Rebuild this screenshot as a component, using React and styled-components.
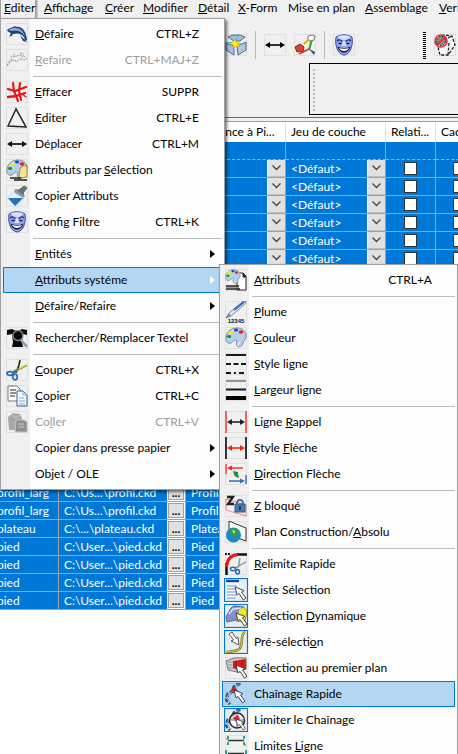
import React from "react";
import styled, { createGlobalStyle, css } from "styled-components";

const Global = createGlobalStyle`
  * { box-sizing: border-box; }
  body { margin: 0; background: #fff; overflow: hidden; }
  body, button, select, input { font-family: Lato, "Open Sans", sans-serif; font-size: 12px; line-height: 16px; color: #000; }
  button, select, input { margin: 0; padding: 0; border: 0; border-radius: 0; background: none; }
  u { text-underline-offset: 1px; text-decoration-thickness: 1px; text-decoration-skip-ink: none; }
`;

const C = { face: "#f0f0f0", blue: "#0078d7", line: "#a0a0a0", hot: "#b3d7f3", menu: "#fdfdfd" };

const Window = styled.div`
  position: relative;
  display: flex;
  flex-direction: column;
  height: 100vh;
  overflow: hidden;
`;

const MenuBar = styled.nav`
  display: grid;
  grid-template-columns: 36px 65px 38px 55px 40px 50px 77px 74px 1fr;
  height: 18px;
  background: ${C.face};
  overflow: hidden;
`;

const BarItem = styled.button`
  height: 18px;
  padding: 0 0 2px ${(p) => (p.$open ? 3 : 4)}px;
  text-align: left;
  white-space: nowrap;
  ${(p) =>
    p.$open
      ? css`border: solid ${C.line}; border-width: 0 1px; box-shadow: 1px 0 2px #888;`
      : css`&:nth-child(2) { padding-left: 8px; }`}
`;

const ToolArea = styled.header`
  flex: none;
  display: flex;
  flex-direction: column;
  height: 100px;
  padding-top: 13px;
  background: ${C.face};
  border-bottom: 1px solid #696969;
`;

const ToolRow = styled.div`
  display: flex;
  align-items: center;
  height: 28px;
  padding-left: 225px;
  gap: 8px;
`;

const ToolButton = styled.button`
  flex: none;
  width: 22px;
  height: 22px;
  margin-right: ${(p) => p.$after || 0}px;
`;

const ToolRule = styled.span`
  width: 1px;
  height: 28px;
  background: #b8b8b8;
`;

const Grip = styled.span`
  display: block;
  width: ${(p) => p.$w}px;
  height: ${(p) => p.$h}px;
  background: repeating-linear-gradient(${(p) => p.$c} 0 ${(p) => p.$step / 2}px, transparent ${(p) => p.$step / 2}px ${(p) => p.$step}px);
`;

const DockPanel = styled.section`
  height: 52px;
  margin: 4px 0 0 309px;
  padding: 5px 3px;
  border: 1px solid #000;
  border-right: 0;
`;

const Grid = styled.main`
  flex: 1;
  min-height: 0;
  margin-top: 3px;
  border-top: 1px solid ${C.line};
  background: #fff;
  box-shadow: 0 -3px 0 ${C.face};
  overflow: hidden;
`;

const Table = styled.table`
  width: 520px;
  margin-left: -4px;
  table-layout: fixed;
  border-collapse: separate;
  border-spacing: 0;
`;

const Th = styled.th`
  height: 20px;
  padding: 0 5px;
  border-right: 1px solid #e0e0e0;
  font-weight: 400;
  text-align: left;
  white-space: nowrap;
  overflow: hidden;
`;

const Td = styled.td`
  height: 18px;
  padding: 0;
  background: ${C.blue};
  background-clip: padding-box;
  color: #fff;
  border-right: 1px solid ${C.line};
  border-bottom: 1px ${(p) => (p.$first ? "dashed #e8b020" : `solid ${C.line}`)};
  vertical-align: top;
  white-space: nowrap;
  overflow: hidden;
`;

const BodyRow = styled.tr`
  background: ${C.blue};
`;

const Cell = styled.div`
  display: flex;
  align-items: center;
  justify-content: ${(p) => (p.$center ? "center" : "flex-start")};
  height: 17px;
  padding-left: ${(p) => p.$pad || 0}px;
`;

const Grow = styled.span`
  flex: 1;
  min-width: 0;
`;

const Browse = styled.button`
  width: 18px;
  height: 17px;
  border: 1px solid #fff;
  background: #e1e1e1;
  box-shadow: inset 0 0 0 1px ${C.line};
  font-weight: 700;
  line-height: 8px;
`;

const Combo = styled.label`
  display: flex;
  flex: 1;
  height: 17px;
`;

const PickButton = styled.button`
  display: flex;
  height: 17px;
`;

const Select = styled.select`
  flex: 1;
  height: 17px;
  appearance: none;
  color: #fff;
`;

const Drop = styled.span`
  display: flex;
  align-items: center;
  justify-content: center;
  width: 18px;
  height: 17px;
  background: #e1e1e1;
  border-left: 1px solid #fff;
  border-bottom: 1px solid #c0c0c0;
  pointer-events: none;
`;

const Check = styled.input`
  appearance: none;
  width: 13px;
  height: 13px;
  border: 1px solid #333;
  background: #fff;
`;

const Popup = styled.div`
  position: absolute;
  z-index: ${(p) => (p.$sub ? 2 : 1)};
  left: ${(p) => (p.$sub ? 219 : 0)}px;
  top: ${(p) => (p.$sub ? 264 : 18)}px;
  width: ${(p) => (p.$sub ? 239 : 225)}px;
  padding: 2px;
  border: 1px solid ${C.line};
  background: linear-gradient(to right, ${C.face} 29px, ${C.menu} 29px);
  box-shadow: 2px 2px 3px rgba(0, 0, 0, 0.55);
`;

const Item = styled.button`
  display: flex;
  align-items: center;
  width: 100%;
  height: 26px;
  padding: 0 1px;
  border: 1px solid ${(p) => (p.$hot ? C.blue : "transparent")};
  background: ${(p) => (p.$hot ? C.hot : "transparent")};
  color: ${(p) => (p.disabled ? "#9d9d9d" : "#000")};
  text-align: left;
  white-space: nowrap;
`;

const IconBox = styled.span`
  flex: none;
  display: flex;
  align-items: center;
  justify-content: center;
  width: 24px;
  height: 24px;
  margin-right: 6px;
  border: 1px solid ${(p) => (p.$checked ? C.blue : "transparent")};
  background: ${(p) => (p.$checked ? "#e4eef7" : "transparent")};
`;

const Keys = styled.span`
  margin-right: 21px;
`;

const Arrow = styled.span`
  width: 5px;
  height: 8px;
  margin-right: 5px;
  background: ${(p) => (p.$light ? "#fff" : "#000")};
  clip-path: polygon(0 0, 100% 50%, 0 100%);
`;

const Separator = styled.hr`
  height: 1px;
  margin: 3px 0 2px 30px;
  border: 0;
  background: #bdbdbd;
`;

const DoubleArrow = ({ c = "#000", x1 = 1, x2 = 21, y = 11 }) => (
  <g fill={c}>
    <path d={`M${x1} ${y}l5-3v6z M${x2} ${y}l-5-3v6z`} />
    <path d={`M${x1 + 3} ${y}H${x2 - 3}`} stroke={c} strokeWidth="1.6" />
  </g>
);

const Palette = () => (
  <>
    <path d="M1 13C0 6 5 1 12 1c6 0 10 4 9 9-.5 3-3 4-3 6 0 3-4 5-6 3-2-3 1-5-1-6-2-.8-3 2-5 3-3 1-4.600-1-5-3z" fill="#b4cfeb" stroke="#6a7890" strokeWidth=".8" />
    <path d="M3 12c0-5 3-9 9-9M14 15c0 2-1 3-1 4" stroke="#dcecfa" strokeWidth="1.500" />
    <ellipse cx="6" cy="5.500" rx="2.500" ry="1.800" fill="#f4ec10" />
    <ellipse cx="11" cy="3" rx="2.200" ry="1.600" fill="#1747c0" />
    <ellipse cx="16" cy="5" rx="2.300" ry="1.800" fill="#ec2020" />
    <ellipse cx="4" cy="9.500" rx="2.200" ry="1.800" fill="#1b9a2c" />
  </>
);

const Mask = () => (
  <>
    <path d="M3 3c5-3 11-3 16 0 1 5 0 10-2 14-2 3-5 4-6 4s-4-1-6-4C3 13 2 8 3 3z" fill="#8ea2ea" stroke="#4450a0" />
    <path d="M5 2c4-1 8-1 12 0-1 3-3 4-6 4S6 5 5 2zM10 7h2l1 5H9z" fill="#d9e1ff" />
    <path d="M4 7c2-2 4-1 5 1M13 8c1-2 3-3 5-1" stroke="#20286e" strokeWidth="1.200" />
    <path d="M5 9.500c1-1 3-1 4 0-1 1-3 1-4 0zm8 0c1-1 3-1 4 0-1 1-3 1-4 0z" fill="#0b1038" />
    <path d="M4.500 12.500c4 2 9 2 13 0-1 4-4 6-6.500 6s-5.500-2-6.500-6z" fill="#10154a" />
    <path d="M6 14c3 1 7 1 10 0-1 2-3 3-5 3s-4-1-5-3z" fill="#fff" />
  </>
);

const Cursor = ({ x = 10, y = 8, flip }) => (
  <path
    d="M0 0l2 8 2-1.600 4.500 6.600 2.500-1.800L6.500 5 9 3.500z"
    transform={`translate(${x} ${y})${flip ? " scale(.85)" : ""}`}
    fill="#fff" stroke="#333" strokeWidth=".9"
  />
);

const Scissors = () => (
  <>
    <path d="M14 1l-1 5-3 8" stroke="#222" strokeWidth="1.600" />
    <path d="M21 6l-8 4-6 3" stroke="#8a8a40" strokeWidth="2" />
    <path d="M21 5.500l-8 4" stroke="#f0ea50" strokeWidth="1.300" />
    <ellipse cx="4" cy="14.500" rx="3" ry="1.900" stroke="#2a67b8" strokeWidth="1.700" />
    <ellipse cx="9" cy="18" rx="2.300" ry="2.800" stroke="#2a67b8" strokeWidth="1.700" />
    <path d="M7 13.500l4-1" stroke="#2a67b8" strokeWidth="2" />
  </>
);

const Chain = () => (
  <>
    <path d="M15 0L9 4l-1 4-5 3-2 5 4 5" stroke="#3b4f78" strokeWidth="3.500" strokeDasharray="4 1.500" />
    <path d="M14 1L9 5 7 9l-4 3-1 4 4 4" stroke="#a3b4d6" />
    <path d="M6 6l4-2 3 4-4 2z" fill="#e01818" />
  </>
);

const ICONS = {
  dolphin: (
    <>
      <path d="M1 7c2-2 4-2 6-3 1-1 3-1 3 0 6-1 10 4 11 13l-2 1-1-4c-3-4-7-4-11-3-1 0-1 2-3 1l1-2C3 9 2 9 1 7z" fill="#17407c" />
      <path d="M2 7c3-1 5-3 8-2 5 0 8 4 9 9-3-6-8-7-13-6z" fill="#86a9d8" />
      <path d="M5 11l-2 3 4-2zM14 12l3 6 4 1z" fill="#1c3f84" />
    </>
  ),
  redo: (
    <path d="M1 17c1-4 3-6 5-7l-1-3 4 1c3-2 7-3 10 0l2 2-3 1-4-1-4 3-1-2-4 1-4 5M7 5l3 2m4-3l4 1m-2 2v2" stroke="#a0a0a0" strokeDasharray="2.500 1" />
  ),
  erase: (
    <g stroke="#e81414" strokeLinecap="round">
      <path d="M7 2l1 8 4 10M14 2l-1 8 2 9" strokeWidth="2.100" />
      <path d="M2 8l7 2 11-4M2 16l8-1 9-3" strokeWidth="2.300" />
      <path d="M16 13l4 3" strokeWidth="1.300" />
    </g>
  ),
  triangle: <path d="M10 2L2 19l18 1z" stroke="#222" strokeWidth="1.500" />,
  move: <DoubleArrow />,
  paletteTag: (
    <>
      <Palette />
      <path d="M14 9l5-3 2 2v10l-8 1z" fill="#f5e58a" stroke="#988b46" />
      <path d="M4 19h11M8 21h13" stroke="#222" strokeWidth="1.300" />
    </>
  ),
  brush: (
    <>
      <path d="M18 1l3 2-4 5 1 3-9-6 4 0z" fill="#68717c" stroke="#59616a" />
      <path d="M9 4l10 7-2 2-9-6z" fill="#8e979f" />
      <path d="M7 7l11 7-8 7-9-8z" fill="#e6f1fa" stroke="#b8cfe0" strokeWidth=".6" />
      <path d="M2 13h15l-8 8z" fill="#1d73bd" />
    </>
  ),
  mask: <Mask />,
  shirt: (
    <>
      <path d="M6 2c3 2 7 2 10 0l5 1v5l-4-1-1 8 1 5H6l1-5-1-8-5 1V3z" fill="#080808" />
      <circle cx="12" cy="8.500" r="5" stroke="#7b8da4" strokeWidth="1.300" />
      <path d="M15 13l6 7" stroke="#8b9bb0" strokeWidth="2.500" />
    </>
  ),
  scissors: <Scissors />,
  copy: (
    <>
      <path d="M2 1h9l3 3v12H2z" fill="#fff" stroke="#777" />
      <path d="M4 5h6M4 8h6M4 11h5" stroke="#222" strokeWidth="1.200" />
      <path d="M11 6h6l4 4v11H11z" fill="#f4f9ff" stroke="#39619a" />
      <path d="M17 6v4h4M13 13h5M13 16h6M13 19h6" stroke="#80a8d0" />
    </>
  ),
  paste: (
    <>
      <path d="M2 6l5-4 7 1 2 4v12H3z" fill="#a8a8a8" />
      <path d="M10 9h8l3 2v10H9z" fill="#8e8e8e" stroke="#c4c4c4" />
      <path d="M6 4l4 3 4-3M12 13h6M12 16h6" stroke="#cfcfcf" />
    </>
  ),
  palettePage: (
    <>
      <path d="M12 4h6l3 3v14H12z" fill="#fff" stroke="#222" />
      <path d="M18 4v4h3" fill="#222" stroke="#222" />
      <g transform="scale(.72)"><Palette /></g>
      <path d="M1 17h13M1 20h14" stroke="#222" strokeWidth="1.500" />
      <path d="M1 18.500h13" stroke="#999" />
    </>
  ),
  pen: (
    <>
      <path d="M1 17l3-5L17 1l4-1-1 3L6 15z" fill="#dbe7f4" stroke="#58708c" strokeWidth=".8" />
      <path d="M9 9L19 1" stroke="#2a6fc0" strokeWidth="1.800" />
      <path d="M1 17l3-4 2 1z" fill="#777" />
      <text x="11" y="22" textAnchor="middle" fontSize="6" fontWeight="700" fontFamily="Liberation Sans" fill="#111">12345</text>
    </>
  ),
  palette: <Palette />,
  lineStyle: (
    <g stroke="#1a1a1a" strokeWidth="2">
      <path d="M1 2h20" />
      <path d="M1 11h20" strokeDasharray="5 2.500" />
      <path d="M1 20h20" strokeDasharray="5 3 2 3" />
    </g>
  ),
  lineWidth: (
    <>
      <path d="M1 2h20" stroke="#777" strokeWidth="1.500" />
      <path d="M1 10.500h20" stroke="#1a1a1a" strokeWidth="2" />
      <path d="M1 19h20" stroke="#000" strokeWidth="4" />
    </>
  ),
  extension: (
    <>
      <path d="M1 0v22M21 0v22" stroke="#f33" strokeWidth="1.500" />
      <DoubleArrow x1={2} x2={20} c="#222" />
    </>
  ),
  arrowStyle: (
    <>
      <path d="M1 0v22M21 0v22" stroke="#222" strokeWidth="1.800" />
      <DoubleArrow x1={2} x2={20} c="#f32a12" />
    </>
  ),
  arrowDir: (
    <>
      <path d="M1 1v10M4 5h14" stroke="#f33" strokeWidth="1.400" />
      <path d="M2 5l5-2.500v5z" fill="#f22" />
      <path d="M21 12v9M4 18h13" stroke="#2f6fbd" strokeWidth="1.400" />
      <path d="M20 18l-5-2.500v5z" fill="#2f6fbd" />
      <path d="M8 8l5 1 0 2 1 4-3-1-2-2z" fill="#2f8a3c" />
    </>
  ),
  zLock: (
    <>
      <path d="M1 4l20 6v11L1 15z" stroke="#f5847a" />
      <path d="M2 2h6L3 9h6" stroke="#222" strokeWidth="2.300" />
      <path d="M12 11V8c0-4 6-4 6 0v3" stroke="#47719e" strokeWidth="1.800" />
      <path d="M10 9h10v8H10z" fill="#4a7cb4" stroke="#2d5788" />
      <path d="M15 11v4" stroke="#163452" strokeWidth="1.800" />
    </>
  ),
  globe: (
    <>
      <path d="M4 0l17 7v13L4 14z" fill="#f8f8f8" stroke="#333" />
      <circle cx="8.500" cy="14" r="7.500" fill="#1c86cf" />
      <path d="M4 10l4-3 5 1 1 4-4 2-2 4-2-4zM11 17l4-2-2 4z" fill="#32a33a" />
      <path d="M7 9l3 1-1 3z" fill="#d8efb0" />
    </>
  ),
  trim: (
    <>
      <path d="M1.500 22V10M11 1.500h11" stroke="#111" strokeWidth="2.500" />
      <path d="M1.500 14C2 6 6 2 13 1.500" stroke="#ec1616" strokeWidth="3" />
      <path d="M0 1h5" stroke="#111" strokeWidth="2" strokeDasharray="2 1" />
      <g transform="translate(5 5) scale(.76)">
        <path d="M13 0l-2 13M21 5L7 13" stroke="#8b99a8" strokeWidth="2" />
        <ellipse cx="4" cy="14.500" rx="3.500" ry="2.200" stroke="#2a67b8" strokeWidth="2" />
        <ellipse cx="10" cy="18" rx="2.500" ry="3" stroke="#2a67b8" strokeWidth="2" />
      </g>
    </>
  ),
  list: (
    <>
      <path d="M1 1h13v19H1z" fill="#f7fbff" />
      <path d="M1 2h13" stroke="#174ba0" strokeWidth="2.500" />
      <path d="M2 7h10M2 10h10M2 13h10M2 16h10M2 19h9" stroke="#6a92c4" />
      <Cursor x={10} y={8} />
    </>
  ),
  dynamic: (
    <>
      <path d="M1 12l5-9 3-2 10 1-5 4-3 9-9 2z" fill="#8291cc" stroke="#56629c" />
      <path d="M14 4l5-2 3 4-2 11-9-1z" fill="#f0e824" stroke="#999340" />
      <path d="M4 9l4-5 8-1" stroke="#dce2f8" strokeWidth="1.500" />
      <Cursor x={11} y={8} />
    </>
  ),
  preselect: (
    <>
      <path d="M20 1c-5 3-2 9-4 14-1 5-7 5-15 6" stroke="#86801c" strokeWidth="2.600" />
      <path d="M20 1c-5 3-2 9-4 14-1 5-7 5-15 6" stroke="#e0d63c" />
      <path d="M14 14l-1-8-2 1.500L7 1 4 3l4.500 6L6 10z" fill="#fff" stroke="#444" strokeWidth=".9" />
    </>
  ),
  front: (
    <>
      <path d="M1 4l8-3h12v11l-9 3-9-2z" fill="#d0d0d0" stroke="#777" />
      <path d="M1 5h10v9M11 5l10-3M3 8h6M3 11h6" stroke="#999" />
      <path d="M8 4l13-2v10l-5 2-8-3z" fill="#e41a1a" />
      <path d="M11 4v7M17 3v8" stroke="#8d1010" strokeWidth=".7" />
      <Cursor x={11} y={8} />
    </>
  ),
  chain: (
    <>
      <Chain />
      <Cursor x={9} y={7} />
    </>
  ),
  chainLimit: (
    <>
      <Chain />
      <circle cx="12" cy="11.500" r="7.500" fill="#fff" fillOpacity=".7" stroke="#222" strokeWidth="1.400" />
      <path d="M5 11h15M12 4v15" stroke="#555" strokeWidth=".8" />
      <path d="M8 9l5-3 2 4-4 3z" fill="#d8283c" />
      <Cursor x={11} y={10} flip />
    </>
  ),
  lineLimits: (
    <>
      <path d="M3 5.500h16M3 18.500h16" stroke="#333" strokeWidth="1.500" />
      <path d="M3 1v3M19 1v3M3 7v3M19 7v3M1 15v5M21 15v5" stroke="#2ba394" strokeWidth="2" />
      <path d="M1 4h2M19 10h2" stroke="#e33" />
    </>
  ),
  planes: (
    <>
      <path d="M3 3l5-2h7l5 2-5 4H9z" fill="#a8bade" stroke="#53668e" />
      <path d="M1 9l8 3v9l-8-5z" fill="#a9bde0" stroke="#53668e" />
      <path d="M12 12l9-4v8l-8 5z" fill="#b4c4e2" stroke="#53668e" />
      <path d="M1 9l9-1 3-6M10 10h9" stroke="#25c5b8" />
      <path d="M10 5l1 3 4-1-2 3 2 3-4-1-2 2-1-3-3-1 3-2z" fill="#ffee10" stroke="#d8a010" strokeWidth=".6" />
    </>
  ),
  axes: (
    <>
      <path d="M18 5l-3 11" stroke="#20b430" strokeWidth="2.200" />
      <path d="M15 15L5 20" stroke="#e22" strokeWidth="1.500" />
      <path d="M1 13l5-3 4 3-1 4-6 1z" fill="#dd442e" stroke="#832b20" />
      <path d="M14 2l4-1 3 1-1 4-4 1-2-1z" fill="#fff" stroke="#777" />
      <path d="M10 10l5-5" stroke="#efae20" strokeWidth="2.300" />
      <path d="M15 15l6 3-1 3z" fill="#24487c" />
    </>
  ),
  hide: (
    <>
      <path d="M3 9l3 12h8l7-10-3-9-8-1zM10 6l8-4M15 9l-1 12" fill="#fafafa" stroke="#222" strokeWidth="1.300" strokeDasharray="3 1.500" />
      <circle cx="7" cy="7" r="4.500" fill="#888" stroke="#222" strokeDasharray="2 1" />
      <circle cx="7" cy="7" r="6" stroke="#e22f2f" strokeWidth="1.600" />
      <path d="M3 11l8-8" stroke="#e22f2f" strokeWidth="1.600" />
    </>
  ),
};

const Drawing = styled.svg`
  display: block;
  width: 22px;
  height: 22px;
`;

const Icon = ({ name }) => (
  <Drawing viewBox="0 0 22 22" fill="none" aria-hidden="true">
    <rect x=".5" y=".5" width="21" height="21" stroke="#888" strokeOpacity=".15" />
    {ICONS[name]}
  </Drawing>
);

/* An ampersand marks the access key of a label. */
const Mnemonic = ({ text }) => {
  const at = text.indexOf("&");
  if (at < 0) return text;
  return (
    <>
      {text.slice(0, at)}
      <u>{text[at + 1]}</u>
      {text.slice(at + 2)}
    </>
  );
};

const BAR = ["&Editer", "&Affichage", "&Créer", "&Modifier", "&Détail", "&X-Form", "Mise en plan", "&Assemblage", "&Verif"];

const EDIT_MENU = [
  { text: "&Défaire", icon: "dolphin", keys: "CTRL+Z" },
  { text: "&Refaire", icon: "redo", keys: "CTRL+MAJ+Z", disabled: true },
  null,
  { text: "&Effacer", icon: "erase", keys: "SUPPR" },
  { text: "&Editer", icon: "triangle", keys: "CTRL+E" },
  { text: "Déplacer", icon: "move", keys: "CTRL+M" },
  { text: "Attributs par &Sélection", icon: "paletteTag" },
  { text: "Copier Attributs", icon: "brush" },
  { text: "Config Filtre", icon: "mask", keys: "CTRL+K" },
  null,
  { text: "&Entités", more: true },
  { text: "&Attributs systéme", more: true, hot: true },
  { text: "&Défaire/Refaire", more: true },
  null,
  { text: "Rechercher/Remplacer Textel", icon: "shirt" },
  null,
  { text: "&Couper", icon: "scissors", keys: "CTRL+X" },
  { text: "&Copier", icon: "copy", keys: "CTRL+C" },
  { text: "Co&ller", icon: "paste", keys: "CTRL+V", disabled: true },
  { text: "Copier dans presse papier", more: true },
  { text: "Objet / OLE", more: true },
];

const ATTR_MENU = [
  { text: "&Attributs", icon: "palettePage", keys: "CTRL+A" },
  null,
  { text: "&Plume", icon: "pen" },
  { text: "&Couleur", icon: "palette" },
  { text: "&Style ligne", icon: "lineStyle" },
  { text: "&Largeur ligne", icon: "lineWidth" },
  null,
  { text: "Ligne &Rappel", icon: "extension" },
  { text: "Style &Flèche", icon: "arrowStyle" },
  { text: "&Direction Flèche", icon: "arrowDir" },
  null,
  { text: "&Z bloqué", icon: "zLock" },
  { text: "Plan Construction/&Absolu", icon: "globe" },
  null,
  { text: "&Relimite Rapide", icon: "trim" },
  { text: "Liste Sélection", icon: "list", checked: true },
  { text: "Sélection &Dynamique", icon: "dynamic", checked: true },
  { text: "Pré-sélecti&on", icon: "preselect", checked: true },
  { text: "Sélection au premier plan", icon: "front" },
  { text: "Chaînage Rapide", icon: "chain", hot: true },
  { text: "Limiter le Chaînage", icon: "chainLimit", checked: true },
  { text: "Limites &Ligne", icon: "lineLimits" },
];

const Menu = ({ items, sub, label }) => (
  <Popup $sub={sub} role="menu" aria-label={label}>
    {items.map((it, i) =>
      it ? (
        <Item key={i} role="menuitem" disabled={it.disabled} $hot={it.hot}>
          <IconBox $checked={it.checked}>{it.icon && <Icon name={it.icon} />}</IconBox>
          <Grow><Mnemonic text={it.text} /></Grow>
          {it.keys && <Keys>{it.keys}</Keys>}
          {it.more && <Arrow $light={it.hot} />}
        </Item>
      ) : (
        <Separator key={i} />
      )
    )}
  </Popup>
);

const PROFILE = ["profil_larg", "C:\\Us...\\profil.ckd", "Profil"];
const TOP = ["plateau", "C:\\...\\plateau.ckd", "Plateau"];
const FOOT = ["pied", "C:\\User...\\pied.ckd", "Pied"];
const ROWS = [...Array(20).fill(PROFILE), TOP, FOOT, FOOT, FOOT, FOOT];

const Chevron = () => (
  <svg width="9" height="6" viewBox="0 0 9 6" fill="none" aria-hidden="true">
    <path d="M.5 .5l4 4 4-4" stroke="#444" strokeWidth="1.300" />
  </svg>
);

export default function App() {
  return (
    <Window>
      <Global />
      <MenuBar>
        {BAR.map((text, i) => (
          <BarItem key={text} $open={i === 0}><Mnemonic text={text} /></BarItem>
        ))}
      </MenuBar>
      <ToolArea>
        <ToolRow>
          <ToolButton aria-label="Plans"><Icon name="planes" /></ToolButton>
          <ToolRule />
          <ToolButton aria-label="Déplacer"><Icon name="move" /></ToolButton>
          <ToolButton aria-label="Repère"><Icon name="axes" /></ToolButton>
          <ToolRule />
          <ToolButton aria-label="Filtre" $after={60}><Icon name="mask" /></ToolButton>
          <Grip $w={3} $h={27} $step={2} $c="#000" />
          <ToolButton aria-label="Masquer"><Icon name="hide" /></ToolButton>
        </ToolRow>
        <DockPanel>
          <Grip $w={2} $h={42} $step={4} $c="#bbb" />
        </DockPanel>
      </ToolArea>
      <Grid>
        <Table>
          <colgroup>
            <col width="63" /><col width="127" /><col width="100" /><col width="100" /><col width="50" /><col />
          </colgroup>
          <thead>
            <tr>
              {["Nom", "Fichier", "Référence à Pi...", "Jeu de couche", "Relati...", "Cadre"].map((h) => <Th key={h}>{h}</Th>)}
            </tr>
          </thead>
          <tbody>
            <BodyRow>{[0, 1, 2, 3, 4, 5].map((c) => <Td key={c} $first />)}</BodyRow>
            {ROWS.map(([name, path, part], r) => (
              <BodyRow key={r}>
                <Td><Cell $pad={1}>{name}</Cell></Td>
                <Td><Cell $pad={5}><Grow>{path}</Grow><Browse aria-label="Parcourir">...</Browse></Cell></Td>
                <Td>
                  <Cell $pad={5}>
                    <Grow>{part}</Grow>
                    <PickButton aria-label="Choisir la référence"><Drop><Chevron /></Drop></PickButton>
                  </Cell>
                </Td>
                <Td>
                  <Cell $pad={5}>
                    <Combo>
                      <Select aria-label="Jeu de couche"><option>&lt;Défaut&gt;</option></Select>
                      <Drop><Chevron /></Drop>
                    </Combo>
                  </Cell>
                </Td>
                <Td><Cell $center><Check type="checkbox" aria-label="Relation" /></Cell></Td>
                <Td><Cell $pad={17}><Check type="checkbox" aria-label="Cadre" /></Cell></Td>
              </BodyRow>
            ))}
          </tbody>
        </Table>
      </Grid>
      <Menu items={EDIT_MENU} label="Editer" />
      <Menu items={ATTR_MENU} label="Attributs systéme" sub />
    </Window>
  );
}
